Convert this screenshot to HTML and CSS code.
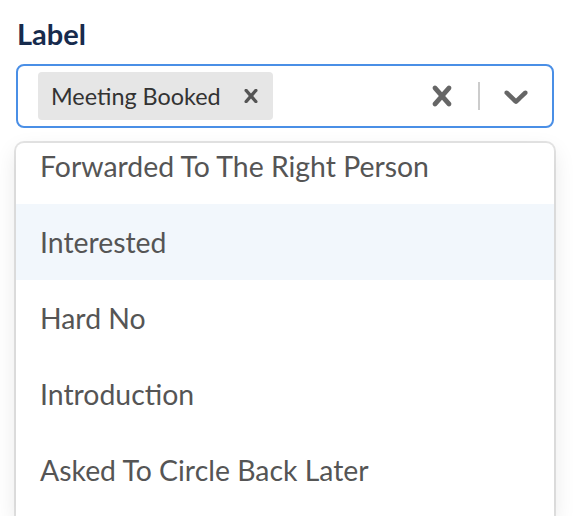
FILE: index.html
```html
<!DOCTYPE html>
<html lang="en">
<head>
<meta charset="utf-8">
<title>Label select</title>
<link rel="stylesheet" href="styles.css">
</head>
<body>
<div class="field">
  <label class="field-label">Label</label>
  <div class="control">
    <div class="value-container">
      <div class="chip">
        <span class="chip-label">Meeting Booked</span>
        <span class="chip-remove">
          <svg width="14" height="14" viewBox="5 5 10 10" aria-hidden="true"><path d="M14.348 14.849c-0.469 0.469-1.229 0.469-1.697 0l-2.651-3.030-2.651 3.029c-0.469 0.469-1.229 0.469-1.697 0-0.469-0.469-0.469-1.229 0-1.697l2.758-3.15-2.759-3.152c-0.469-0.469-0.469-1.228 0-1.697s1.228-0.469 1.697 0l2.652 3.031 2.651-3.031c0.469-0.469 1.228-0.469 1.697 0s0.469 1.229 0 1.697l-2.758 3.152 2.758 3.15c0.469 0.469 0.469 1.229 0 1.698z"/></svg>
        </span>
      </div>
    </div>
    <div class="indicators">
      <div class="indicator">
        <svg width="40" height="40" viewBox="0 0 20 20" aria-hidden="true"><path d="M14.348 14.849c-0.469 0.469-1.229 0.469-1.697 0l-2.651-3.030-2.651 3.029c-0.469 0.469-1.229 0.469-1.697 0-0.469-0.469-0.469-1.229 0-1.697l2.758-3.15-2.759-3.152c-0.469-0.469-0.469-1.228 0-1.697s1.228-0.469 1.697 0l2.652 3.031 2.651-3.031c0.469-0.469 1.228-0.469 1.697 0s0.469 1.229 0 1.697l-2.758 3.152 2.758 3.15c0.469 0.469 0.469 1.229 0 1.698z"/></svg>
      </div>
      <span class="separator"></span>
      <div class="indicator">
        <svg width="40" height="40" viewBox="0 0 20 20" aria-hidden="true"><path d="M4.516 7.548c0.436-0.446 1.043-0.481 1.576 0l3.908 3.747 3.908-3.747c0.533-0.481 1.141-0.446 1.574 0 0.436 0.445 0.408 1.197 0 1.615-0.406 0.418-4.695 4.502-4.695 4.502-0.217 0.223-0.502 0.335-0.787 0.335s-0.57-0.112-0.789-0.335c0 0-4.287-4.084-4.695-4.502s-0.436-1.17 0-1.615z"/></svg>
      </div>
    </div>
  </div>
  <div class="menu">
    <ul class="menu-list">
      <li class="option">Forwarded To The Right Person</li>
      <li class="option is-focused">Interested</li>
      <li class="option">Hard No</li>
      <li class="option">Introduction</li>
      <li class="option">Asked To Circle Back Later</li>
    </ul>
  </div>
</div>
</body>
</html>
```
FILE: styles.css
```css
html, body {
  margin: 0;
  padding: 0;
  background: #fff;
  overflow: hidden;
  font-family: Lato, "Liberation Sans", sans-serif;
}

.field {
  width: 538px;
  padding: 16px 0 0 16px;
}

.field-label {
  display: block;
  margin: 0 0 12px 1px;
  font-size: 29px;
  font-weight: 700;
  line-height: 36px;
  color: #172b4d;
}

.control {
  box-sizing: border-box;
  height: 64px;
  display: flex;
  align-items: center;
  border: 2px solid #4a8fe6;
  border-radius: 8px;
  background: #fff;
}

.value-container {
  flex: 1;
  display: flex;
  align-items: center;
  padding: 0 16px;
}

.chip {
  display: flex;
  align-items: center;
  height: 48px;
  margin: 0 4px;
  border-radius: 4px;
  background: #e6e6e6;
}

.chip-label {
  padding-left: 13px;
  font-size: 23.4px;
  line-height: 48px;
  color: #333;
}

.chip-remove {
  display: flex;
  align-items: center;
  padding: 0 15px 0 23px;
  fill: #555;
}

.indicators {
  display: flex;
  align-self: stretch;
  align-items: center;
}

.indicator {
  display: flex;
  padding: 0 16px;
  fill: #666;
}

.separator {
  align-self: stretch;
  width: 2px;
  margin: 16px 0;
  background: #ccc;
}

.menu {
  height: 373px;
  margin-top: 15px;
  border-radius: 8px 8px 0 0;
  background: #fff;
  box-shadow: 0 0 0 2px rgba(0, 0, 0, 0.1), 0 8px 22px rgba(0, 0, 0, 0.1);
  overflow: hidden;
}

.menu-list {
  list-style: none;
  margin: -15px 0 0;
  padding: 0;
}

.option {
  padding: 16px 24px;
  font-size: 28.4px;
  line-height: 44px;
  color: #555;
}

.option.is-focused {
  background: #f2f7fc;
}
```
